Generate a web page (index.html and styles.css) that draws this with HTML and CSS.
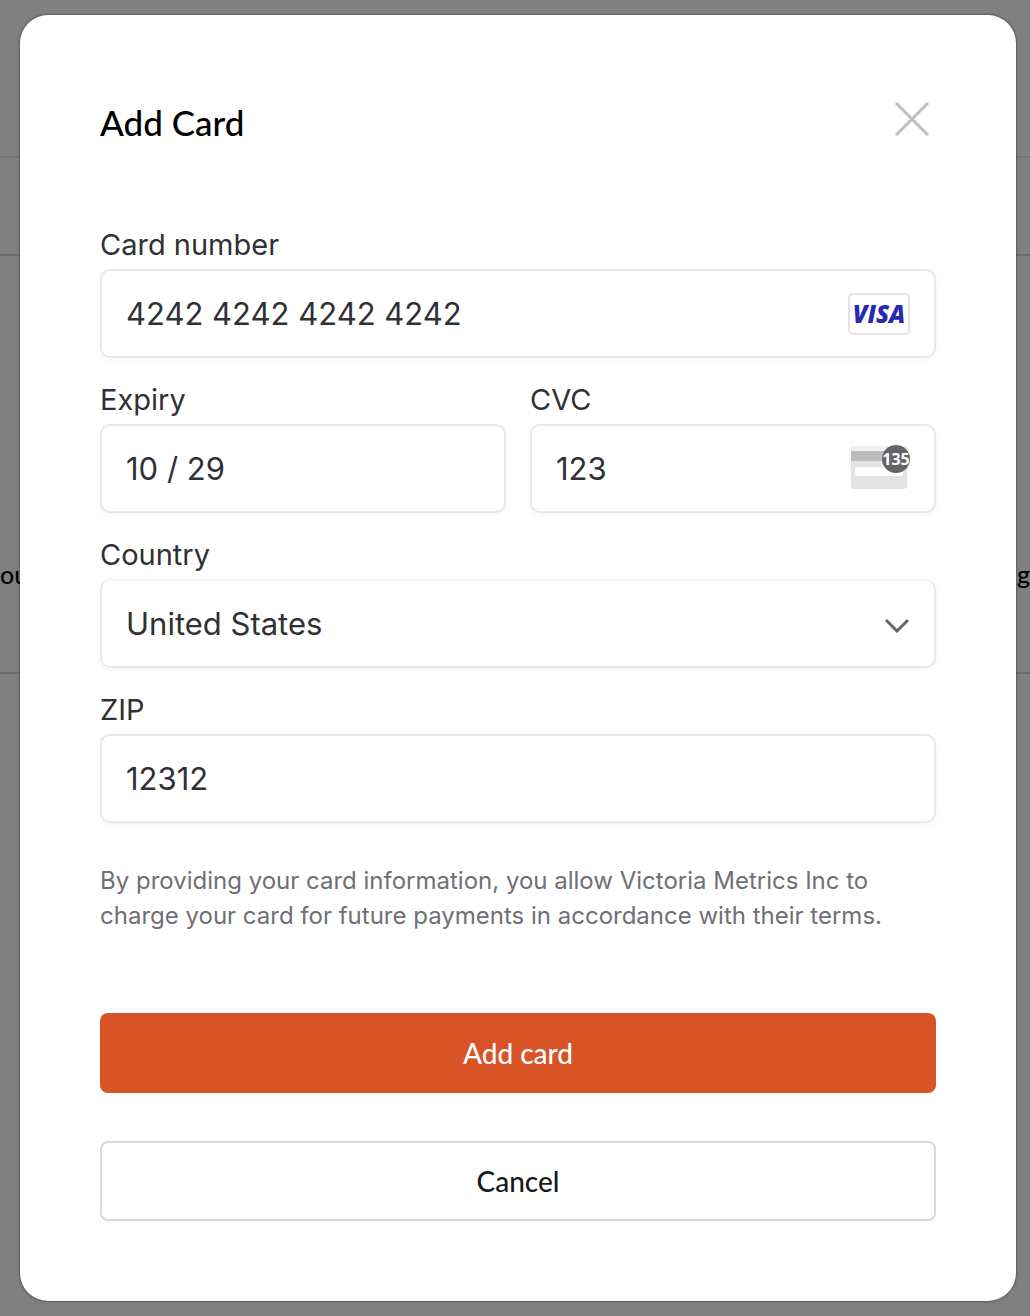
FILE: index.html
```
<!DOCTYPE html>
<html lang="en">
<head>
<meta charset="utf-8">
<meta name="viewport" content="width=device-width, initial-scale=1">
<title>Add Card</title>
<link rel="stylesheet" href="styles.css">
</head>
<body>
<div class="screen">
  <div class="backdrop" aria-hidden="true">
    <div class="band band-top"></div>
    <div class="band band-nav"></div>
    <div class="band band-main"><span>ou</span><span>g</span></div>
  </div>

  <main class="modal" role="dialog" aria-labelledby="modal-title">
    <header class="modal-header">
      <h1 class="modal-title" id="modal-title">Add Card</h1>
      <button class="close" type="button" aria-label="Close">
        <svg width="34" height="34" viewBox="0 0 34 34"><path d="M1 1L33 33M33 1L1 33"/></svg>
      </button>
    </header>

    <form class="form">
      <div class="fields">
        <div class="field field-wide">
          <label for="number">Card number</label>
          <div class="control">
            <input id="number" type="text" inputmode="numeric" value="4242 4242 4242 4242">
            <span class="visa">VISA</span>
          </div>
        </div>
        <div class="field">
          <label for="expiry">Expiry</label>
          <div class="control">
            <input id="expiry" type="text" inputmode="numeric" value="10 / 29">
          </div>
        </div>
        <div class="field">
          <label for="cvc">CVC</label>
          <div class="control">
            <input id="cvc" type="text" inputmode="numeric" value="123">
            <svg class="cvc-icon" width="60" height="50" viewBox="0 0 60 50">
              <path d="M1 6a4 4 0 0 1 4-4h48a4 4 0 0 1 4 4v35a4 4 0 0 1-4 4H5a4 4 0 0 1-4-4z" fill="#e3e3e4"/>
              <path d="M1 2h56v6H1z" fill="#f0f0f0"/>
              <path d="M1 7h56v10H1z" fill="#bdbdbe"/>
              <rect x="5" y="23" width="48" height="9" rx="2" fill="#fff"/>
              <circle cx="46" cy="15" r="14" fill="#646468"/>
              <text x="46" y="21" text-anchor="middle">135</text>
            </svg>
          </div>
        </div>
        <div class="field field-wide">
          <label for="country">Country</label>
          <div class="control control-select">
            <select id="country"><option>United States</option></select>
            <svg class="chevron" width="26" height="18" viewBox="0 0 26 18"><path d="M2 5L13 16L24 5"/></svg>
          </div>
        </div>
        <div class="field field-wide">
          <label for="zip">ZIP</label>
          <div class="control">
            <input id="zip" type="text" value="12312">
          </div>
        </div>
      </div>

      <p class="terms">By providing your card information, you allow Victoria Metrics Inc to charge your card for future payments in accordance with their terms.</p>

      <div class="actions">
        <button class="button button-primary" type="button">Add card</button>
        <button class="button button-secondary" type="button">Cancel</button>
      </div>
    </form>
  </main>
</div>
</body>
</html>
```
FILE: styles.css
```
* {
  box-sizing: border-box;
}

body {
  margin: 0;
  background: #808080;
  font-family: Inter, "Liberation Sans", sans-serif;
  color: #303135;
}

.screen {
  display: grid;
  min-height: 100vh;
}

.backdrop,
.modal {
  grid-area: 1 / 1;
}

/* Dimmed page behind the dialog */
.backdrop {
  display: flex;
  flex-direction: column;
  overflow: hidden;
}

.band {
  border-bottom: 2px solid #6c6c6c;
}

.band-top {
  height: 158px;
  border-color: #767676;
}

.band-nav {
  height: 98px;
}

.band-main {
  display: flex;
  justify-content: space-between;
  align-items: flex-end;
  height: 418px;
  padding-bottom: 82px;
  font: 500 25px/32px Lato, sans-serif;
  color: #000;
}

.modal {
  z-index: 1;
  margin: 15px 14px 15px 20px;
  padding: 80px;
  border-radius: 28px;
  background: #fff;
  box-shadow: 0 0 3px rgba(0, 0, 0, 0.6);
}

.modal-header {
  display: flex;
  justify-content: space-between;
  align-items: flex-start;
  height: 56px;
  margin-bottom: 76px;
}

.modal-title {
  margin: 0;
  font: 500 35px/54px Lato, sans-serif;
  color: #000;
}

.close {
  display: flex;
  padding: 7px;
  border: 0;
  background: none;
}

.close path {
  fill: none;
  stroke: #bfbfbf;
  stroke-width: 3;
}

.fields {
  display: grid;
  grid-template-columns: 1fr 1fr;
  gap: 24px;
}

.field {
  display: flex;
  flex-direction: column;
  gap: 6px;
  min-width: 0;
}

.field-wide {
  grid-column: 1 / -1;
}

.field label {
  font-size: 29px;
  line-height: 36px;
}

.control {
  display: flex;
  align-items: center;
  height: 89px;
  padding: 0 24px;
  border: 2px solid #e8e8ea;
  border-radius: 10px;
  background: #fff;
  box-shadow: 0 2px 6px rgba(0, 0, 40, 0.04);
}

.control input,
.control select {
  flex: 1;
  min-width: 0;
  padding: 0;
  border: 0;
  outline: 0;
  appearance: none;
  background: none;
  font: 400 31px/40px Inter, "Liberation Sans", sans-serif;
  color: #303135;
}

.control-select {
  border-top-color: #f5f5f7;
}

.visa {
  width: 62px;
  height: 42px;
  border: 2px solid #e4e4e4;
  border-radius: 5px;
  font: italic 800 24px/38px "Open Sans", sans-serif;
  text-align: center;
  color: #262ab5;
}

.cvc-icon text {
  font: 700 16px "Noto Sans", sans-serif;
  fill: #fff;
}

.chevron path {
  fill: none;
  stroke: #66676b;
  stroke-width: 3;
}

.terms {
  margin: 40px 0 80px;
  font-size: 24px;
  line-height: 35px;
  color: #6f6f75;
}

.actions {
  display: flex;
  flex-direction: column;
  gap: 48px;
}

.button {
  height: 80px;
  border: 0;
  border-radius: 8px;
  font: 500 28px/40px Lato, sans-serif;
}

.button-primary {
  background: #d85325;
  color: #fff;
}

.button-secondary {
  border: 2px solid #d9d9d9;
  background: #fff;
  box-shadow: 0 2px 2px rgba(0, 0, 0, 0.02);
  color: #171a1c;
}
```
